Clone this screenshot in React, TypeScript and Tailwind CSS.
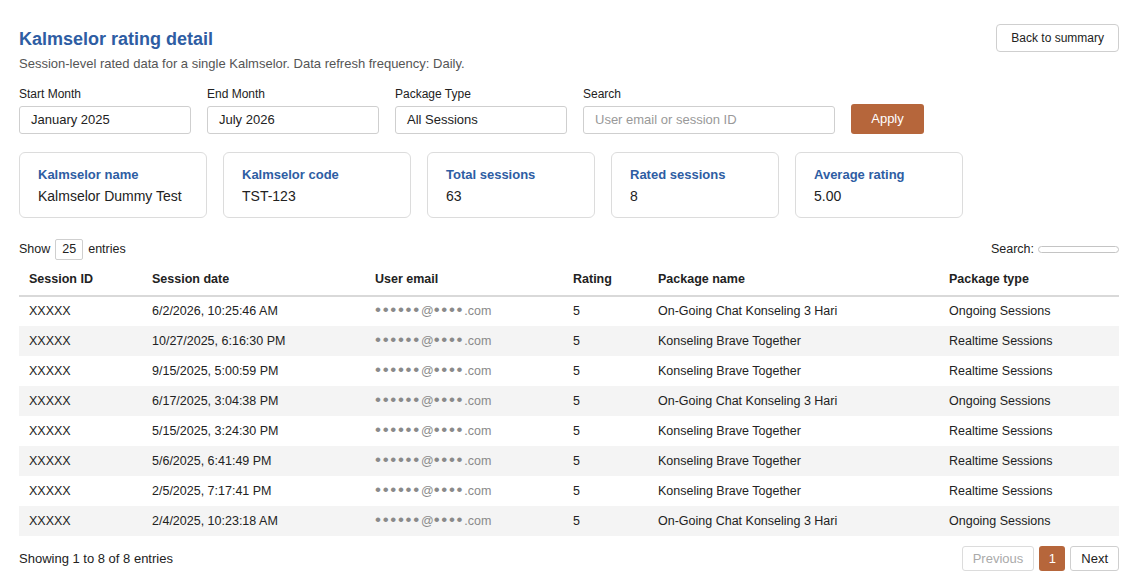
import React from "react";

const rows = [
  ["XXXXX", "6/2/2026, 10:25:46 AM", "5", "On-Going Chat Konseling 3 Hari", "Ongoing Sessions"],
  ["XXXXX", "10/27/2025, 6:16:30 PM", "5", "Konseling Brave Together", "Realtime Sessions"],
  ["XXXXX", "9/15/2025, 5:00:59 PM", "5", "Konseling Brave Together", "Realtime Sessions"],
  ["XXXXX", "6/17/2025, 3:04:38 PM", "5", "On-Going Chat Konseling 3 Hari", "Ongoing Sessions"],
  ["XXXXX", "5/15/2025, 3:24:30 PM", "5", "Konseling Brave Together", "Realtime Sessions"],
  ["XXXXX", "5/6/2025, 6:41:49 PM", "5", "Konseling Brave Together", "Realtime Sessions"],
  ["XXXXX", "2/5/2025, 7:17:41 PM", "5", "Konseling Brave Together", "Realtime Sessions"],
  ["XXXXX", "2/4/2025, 10:23:18 AM", "5", "On-Going Chat Konseling 3 Hari", "Ongoing Sessions"],
];

const cards = [
  ["Kalmselor name", "Kalmselor Dummy Test", "w-[188px]"],
  ["Kalmselor code", "TST-123", "w-[188px]"],
  ["Total sessions", "63", "w-[168px]"],
  ["Rated sessions", "8", "w-[168px]"],
  ["Average rating", "5.00", "w-[168px]"],
];

function Email() {
  return (
    <span className="text-[#8a8a8a] whitespace-nowrap">
      <span className="text-[17px] leading-[10px] tracking-[1.7px]">••••••</span>@<span className="text-[17px] leading-[10px] tracking-[1.7px]">••••</span>.com
    </span>
  );
}

export default function App() {
  return (
    <div className="min-h-[585px] bg-white pl-[19px] pr-[24px] pt-[24px] text-[#222] font-['Liberation_Sans',Arial,sans-serif]">
      <div className="flex justify-between items-start">
        <div>
          <h1 className="mt-[4px] text-[18px] leading-[22px] font-bold text-[#2e5da3]">Kalmselor rating detail</h1>
          <p className="mt-[6px] text-[13px] leading-[16px] text-[#555]">
            Session-level rated data for a single Kalmselor. Data refresh frequency: Daily.
          </p>
        </div>
        <button className="h-[28px] px-[14px] rounded-[4px] border border-[#cfcfcf] bg-white text-[12px] text-[#222]">
          Back to summary
        </button>
      </div>

      <div className="mt-[15px] flex items-end gap-[16px]">
        {[
          ["Start Month", "January 2025", "w-[172px]", false],
          ["End Month", "July 2026", "w-[172px]", false],
          ["Package Type", "All Sessions", "w-[172px]", false],
          ["Search", "User email or session ID", "w-[252px]", true],
        ].map(([label, value, w, ph]) => (
          <div key={label as string} className="flex flex-col">
            <label className="text-[12px] leading-[14px] text-[#222]">{label}</label>
            <div
              className={`mt-[5px] h-[28px] ${w} rounded-[3px] border border-[#cfcfcf] px-[11px] flex items-center text-[13px] ${
                ph ? "text-[#999]" : "text-[#222]"
              }`}
            >
              {value}
            </div>
          </div>
        ))}
        <button className="h-[30px] w-[73px] rounded-[3px] bg-[#b6663b] text-white text-[13px] mb-0">Apply</button>
      </div>

      <div className="mt-[18px] flex gap-[16px]">
        {cards.map(([l, v, w]) => (
          <div key={l} className={`${w} h-[66px] rounded-[6px] border border-[#dcdcdc] pl-[18px] pt-[14px]`}>
            <div className="text-[13px] leading-[16px] font-bold text-[#2e5da3]">{l}</div>
            <div className="mt-[5px] text-[14px] leading-[17px] text-[#222]">{v}</div>
          </div>
        ))}
      </div>

      <div className="mt-[21px] flex items-center justify-between text-[12.5px]">
        <div className="flex items-center">
          <span>Show</span>
          <span className="mx-[5px] h-[21px] px-[6px] flex items-center rounded-[2px] border border-[#cfcfcf]">25</span>
          <span>entries</span>
        </div>
        <div className="flex items-center">
          <span>Search:</span>
          <span className="ml-[4px] h-[7px] w-[81px] rounded-[4px] border border-[#c4c4c4]"></span>
        </div>
      </div>

      <table className="mt-[4px] w-full border-collapse text-[12.5px] table-fixed">
        <colgroup>
          <col className="w-[123px]" />
          <col className="w-[223px]" />
          <col className="w-[198px]" />
          <col className="w-[85px]" />
          <col className="w-[291px]" />
          <col />
        </colgroup>
        <thead>
          <tr className="h-[32px] border-b-2 border-[#d9d9d9]">
            {["Session ID", "Session date", "User email", "Rating", "Package name", "Package type"].map((h) => (
              <th key={h} className="text-left font-bold px-[10px] text-[#222]">
                {h}
              </th>
            ))}
          </tr>
        </thead>
        <tbody>
          {rows.map((r, i) => (
            <tr key={i} className={`h-[30px] ${i % 2 === 1 ? "bg-[#f4f4f4]" : "bg-white"}`}>
              <td className="px-[10px]">{r[0]}</td>
              <td className="px-[10px]">{r[1]}</td>
              <td className="px-[10px]">
                <Email />
              </td>
              <td className="px-[10px]">{r[2]}</td>
              <td className="px-[10px]">{r[3]}</td>
              <td className="px-[10px]">{r[4]}</td>
            </tr>
          ))}
        </tbody>
      </table>

      <div className="mt-[10px] flex items-center justify-between">
        <span className="text-[13px]">Showing 1 to 8 of 8 entries</span>
        <div className="flex items-center gap-[5px] text-[13px]">
          <span className="h-[25px] px-[10px] flex items-center rounded-[3px] border border-[#dcdcdc] text-[#aaa]">Previous</span>
          <span className="h-[25px] w-[26px] flex items-center justify-center rounded-[3px] bg-[#b6663b] text-white">1</span>
          <span className="h-[25px] px-[10px] flex items-center rounded-[3px] border border-[#cfcfcf] text-[#222]">Next</span>
        </div>
      </div>
    </div>
  );
}
